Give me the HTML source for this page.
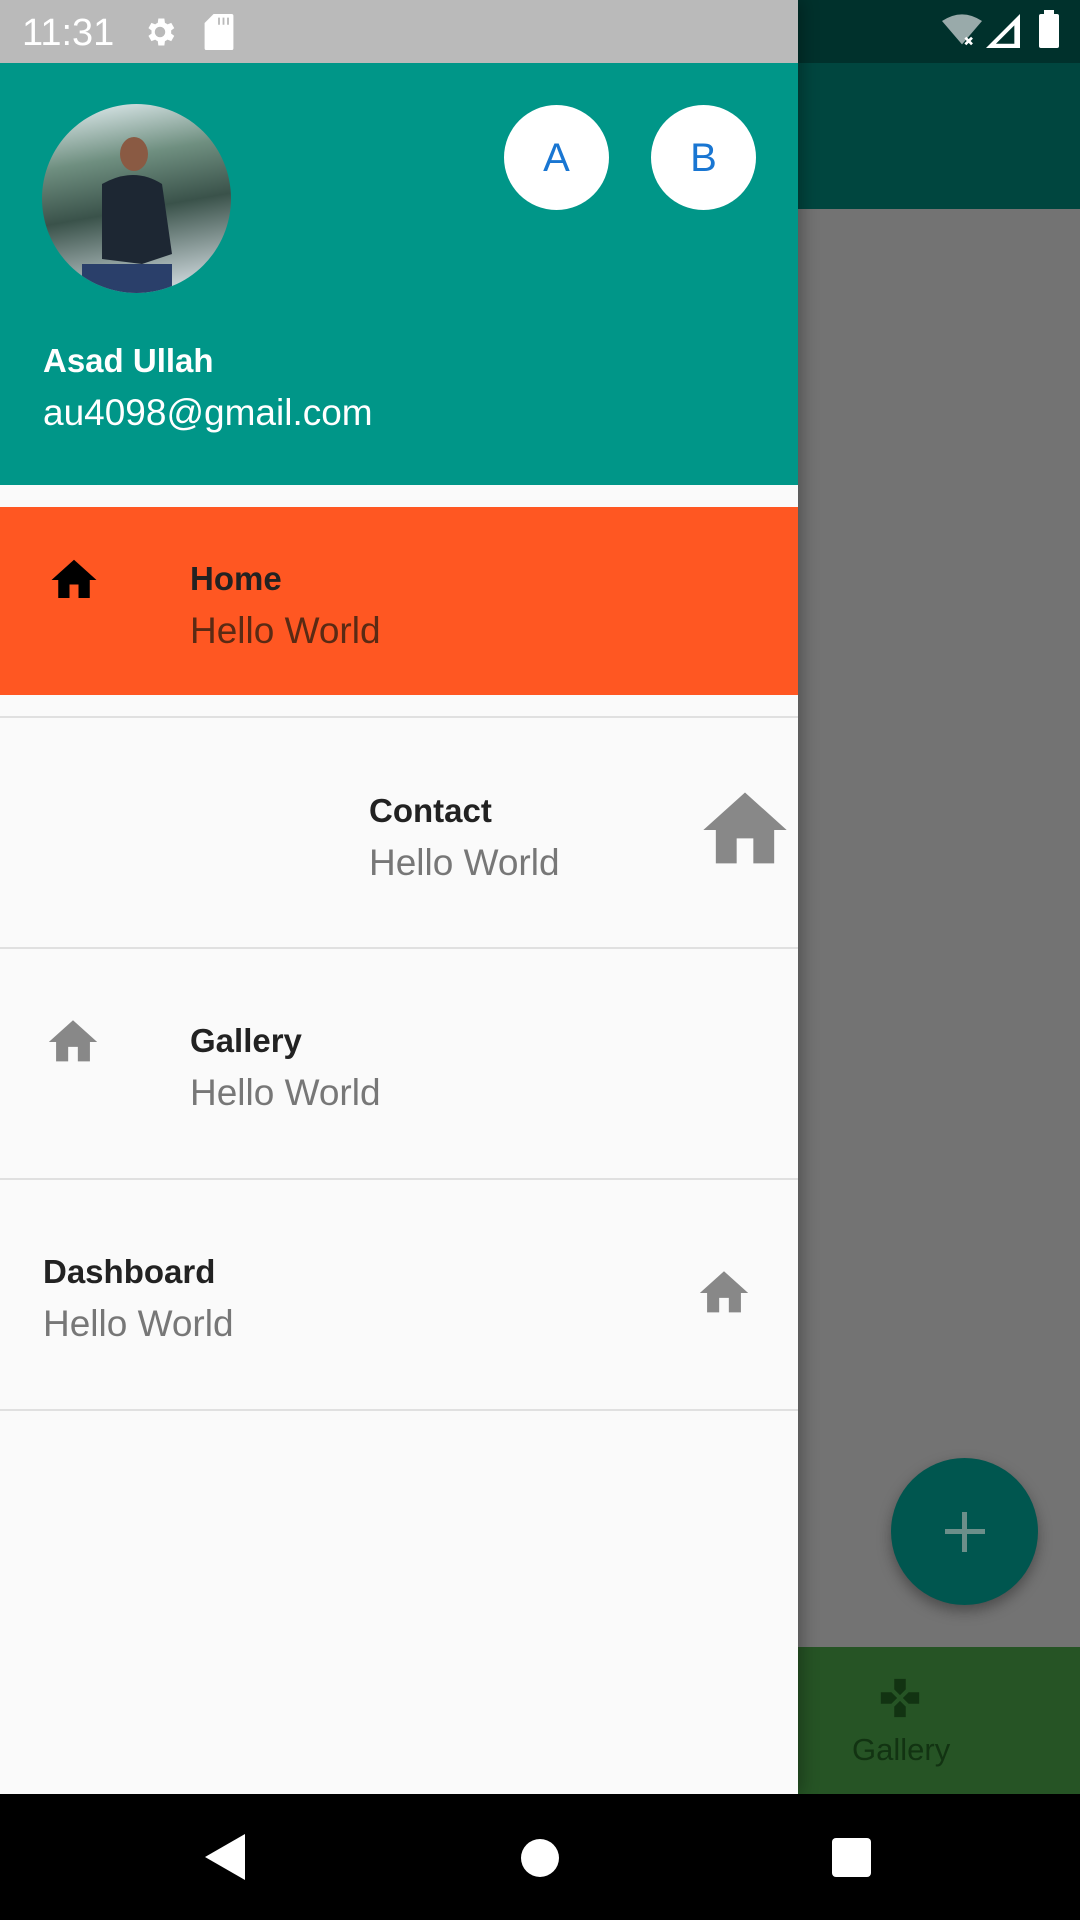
<!DOCTYPE html>
<html><head><meta charset="utf-8"><style>
*{margin:0;padding:0;box-sizing:border-box}
body{width:1080px;height:1920px;position:relative;overflow:hidden;font-family:"Liberation Sans",Roboto,sans-serif;background:#737373}
.a{position:absolute}
.t{position:absolute;line-height:1;white-space:nowrap}
</style></head><body>
<div class="a" style="left:798px;top:0;width:282px;height:63px;background:#00312c"></div>
<div class="a" style="left:798px;top:63px;width:282px;height:146px;background:#00463f"></div>
<div class="a" style="left:798px;top:1647px;width:282px;height:147px;background:#265425"></div>
<svg class="a" style="left:877px;top:1675px" width="46" height="46" viewBox="0 0 24 24"><path fill="#123312" d="M15 7.5V2H9v5.5l3 3 3-3zM7.5 9H2v6h5.5l3-3-3-3zM9 16.5V22h6v-5.5l-3-3-3 3zM16.5 9l-3 3 3 3H22V9h-5.5z"/></svg>
<div class="t" style="left:852px;top:1734px;font-size:31px;color:#123312">Gallery</div>
<div class="a" style="left:891px;top:1458px;width:147px;height:147px;border-radius:50%;background:#00564f;box-shadow:0 6px 14px rgba(0,0,0,.35)"></div>
<div class="a" style="left:945px;top:1529px;width:40px;height:5px;background:#6c8f8a"></div>
<div class="a" style="left:962px;top:1512px;width:5px;height:40px;background:#6c8f8a"></div>
<svg class="a" style="left:942px;top:14px" width="40" height="34" viewBox="0 0 24 20"><path fill="#9aa" d="M12 18L0 4Q12-4 24 4z"/><path fill="#fff" d="M14 14l4 4M18 14l-4 4" stroke="#fff" stroke-width="1.6"/></svg>
<svg class="a" style="left:986px;top:14px" width="34" height="34" viewBox="0 0 24 24"><path fill="#fff" d="M24 0V24H0z"/><path fill="#00312c" d="M20 8v13H7z"/></svg>
<div class="a" style="left:1039px;top:14px;width:20px;height:34px;background:#fff;border-radius:2px"></div>
<div class="a" style="left:1044px;top:10px;width:10px;height:5px;background:#fff"></div>
<div class="a" style="left:0;top:0;width:798px;height:1794px;background:#fafafa;box-shadow:4px 0 16px rgba(0,0,0,.3)"></div>
<div class="a" style="left:0;top:0;width:798px;height:63px;background:#bababa"></div>
<div class="t" style="left:22px;top:14px;font-size:38px;color:#fff">11:31</div>
<svg class="a" style="left:142px;top:14px" width="36" height="36" viewBox="0 0 24 24"><path fill="#fff" d="M19.4 13a7.5 7.5 0 000-2l2.1-1.6-2-3.5-2.5 1a7 7 0 00-1.7-1L14.9 3h-4l-.4 2.9a7 7 0 00-1.7 1l-2.5-1-2 3.5L6.4 11a7.5 7.5 0 000 2l-2.1 1.6 2 3.5 2.5-1a7 7 0 001.7 1l.4 2.9h4l.4-2.9a7 7 0 001.7-1l2.5 1 2-3.5zM12 15.5a3.5 3.5 0 110-7 3.5 3.5 0 010 7z"/></svg>
<svg class="a" style="left:204px;top:14px" width="30" height="36" viewBox="0 0 16 20"><path fill="#fff" d="M5 0h10a1 1 0 011 1v18a1 1 0 01-1 1H1a1 1 0 01-1-1V5z"/><path stroke="#bababa" stroke-width="1" d="M8 2v4M10.5 2v4M13 2v4"/></svg>
<div class="a" style="left:0;top:63px;width:798px;height:422px;background:#009688"></div>
<div class="a" style="left:42px;top:104px;width:189px;height:189px;border-radius:50%;overflow:hidden;background:linear-gradient(170deg,#e8f2f6 0%,#6f8f80 30%,#3a524a 55%,#e6eef4 100%)">
<svg width="189" height="189" viewBox="0 0 189 189"><ellipse cx="92" cy="50" rx="14" ry="17" fill="#8a5a43"/><path d="M60 80q32-18 60 0l10 70-30 10-40-5z" fill="#1d2733"/><path d="M40 160h90v30H40z" fill="#2a3f6a"/></svg></div>
<div class="a" style="left:504px;top:105px;width:105px;height:105px;border-radius:50%;background:#fff"></div>
<div class="t" style="left:504px;top:138px;width:105px;text-align:center;font-size:40px;color:#1976d2">A</div>
<div class="a" style="left:651px;top:105px;width:105px;height:105px;border-radius:50%;background:#fff"></div>
<div class="t" style="left:651px;top:138px;width:105px;text-align:center;font-size:40px;color:#1976d2">B</div>
<div class="t" style="left:43px;top:344px;font-size:33px;font-weight:bold;color:#fff">Asad Ullah</div>
<div class="t" style="left:43px;top:394px;font-size:37px;color:#fff">au4098@gmail.com</div>
<div class="a" style="left:0;top:507px;width:798px;height:188px;background:#ff5722"></div>
<svg class="a" style="left:47px;top:553px" width="54" height="54" viewBox="0 0 24 24"><path fill="#000" d="M10 20v-6h4v6h5v-8h3L12 3 2 12h3v8z"/></svg>
<div class="t" style="left:190px;top:562px;font-size:33px;font-weight:bold;color:#222">Home</div>
<div class="t" style="left:190px;top:612px;font-size:37px;color:#5a2a14">Hello World</div>
<div class="a" style="left:0;top:716px;width:798px;height:2px;background:#e0e0e0"></div>
<div class="t" style="left:369px;top:794px;font-size:33px;font-weight:bold;color:#222">Contact</div>
<div class="t" style="left:369px;top:844px;font-size:37px;color:#777">Hello World</div>
<svg class="a" style="left:695px;top:780px" width="100" height="100" viewBox="0 0 24 24"><path fill="#888" d="M10 20v-6h4v6h5v-8h3L12 3 2 12h3v8z"/></svg>
<div class="a" style="left:0;top:947px;width:798px;height:2px;background:#e0e0e0"></div>
<svg class="a" style="left:44px;top:1013px" width="58" height="58" viewBox="0 0 24 24"><path fill="#888" d="M10 20v-6h4v6h5v-8h3L12 3 2 12h3v8z"/></svg>
<div class="t" style="left:190px;top:1024px;font-size:33px;font-weight:bold;color:#222">Gallery</div>
<div class="t" style="left:190px;top:1074px;font-size:37px;color:#777">Hello World</div>
<div class="a" style="left:0;top:1178px;width:798px;height:2px;background:#e0e0e0"></div>
<div class="t" style="left:43px;top:1255px;font-size:33px;font-weight:bold;color:#222">Dashboard</div>
<div class="t" style="left:43px;top:1305px;font-size:37px;color:#777">Hello World</div>
<svg class="a" style="left:695px;top:1264px" width="58" height="58" viewBox="0 0 24 24"><path fill="#888" d="M10 20v-6h4v6h5v-8h3L12 3 2 12h3v8z"/></svg>
<div class="a" style="left:0;top:1409px;width:798px;height:2px;background:#e0e0e0"></div>
<div class="a" style="left:0;top:1794px;width:1080px;height:126px;background:#000"></div>
<svg class="a" style="left:205px;top:1834px" width="40" height="46" viewBox="0 0 40 46"><path fill="#fff" d="M40 0v46L0 23z"/></svg>
<div class="a" style="left:521px;top:1839px;width:38px;height:38px;border-radius:50%;background:#fff"></div>
<div class="a" style="left:832px;top:1838px;width:39px;height:39px;border-radius:4px;background:#fff"></div>
</body></html>
